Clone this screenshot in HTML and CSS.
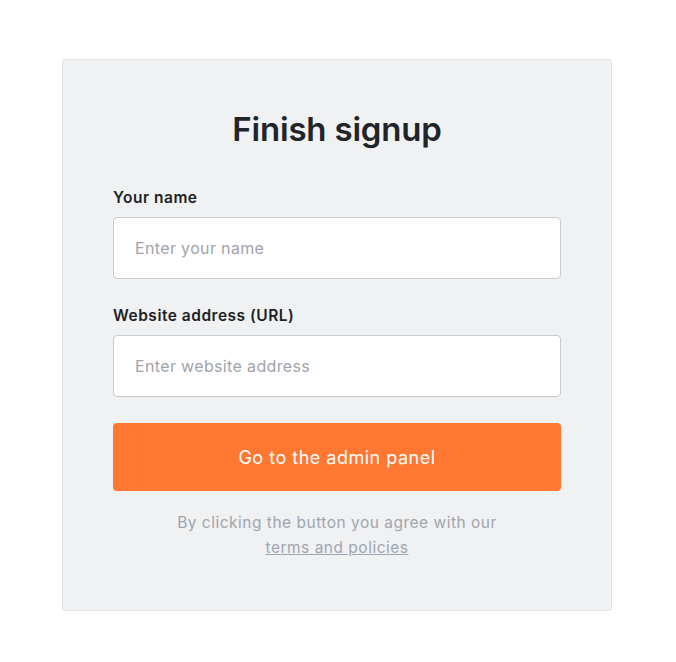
FILE: index.html
```html
<!DOCTYPE html>
<html lang="en">
<head>
  <meta charset="UTF-8">
  <meta name="viewport" content="width=device-width, initial-scale=1.0">
  <title>Finish signup</title>
  <link rel="stylesheet" href="styles.css">
</head>
<body>

  <div class="signup-card">
    <h1 class="signup-title">Finish signup</h1>

    <form class="signup-form" onsubmit="return false;">
      <!-- Name Field -->
      <label for="name">Your name</label>
      <input type="text" id="name" placeholder="Enter your name">

      <!-- Website Field -->
      <label for="website">Website address (URL)</label>
      <input type="text" id="website" placeholder="Enter website address">

      <button type="submit">Go to the admin panel</button>
    </form>

    <p class="signup-note">
      By clicking the button you agree with our<br>
      <a href="#">terms and policies</a>
    </p>
  </div>

</body>
</html>
```

FILE: styles.css
```css
/* General Styling */
body {
  font-family: Inter, "Noto Sans", sans-serif;
  margin: 0;
  background-color: #fff;
}

/* Card */
.signup-card {
  width: 448px;
  margin: 59px 0 0 62px;
  padding: 50px;
  background-color: #f0f1f3;
  border: 1px solid #e2e3e6;
  border-radius: 3px;
}

.signup-title {
  margin: 0;
  font-size: 33px;
  line-height: 38px;
  font-weight: 600;
  color: #212428;
  text-align: center;
  letter-spacing: -0.2px;
}

/* Form */
.signup-form {
  display: flex;
  flex-direction: column;
  margin-top: 40px;
}

.signup-form label {
  font-size: 15.5px;
  line-height: 20px;
  font-weight: 600;
  color: #1d1f22;
  letter-spacing: 0.5px;
  margin-bottom: 9px;
}

.signup-form input {
  height: 62px;
  padding: 0 21px;
  border: 1px solid #c9cacd;
  border-radius: 4px;
  background: #fff;
  font-family: inherit;
  font-size: 16px;
  letter-spacing: 0.35px;
  color: #212428;
  outline: none;
  box-sizing: border-box;
  margin-bottom: 27px;
}

.signup-form input::placeholder {
  color: #9fa3ab;
}

.signup-form input:focus {
  border-color: #ff7731;
}

.signup-form button {
  height: 68px;
  margin-top: -1px;
  border: none;
  border-radius: 4px;
  background-color: #ff7731;
  color: #fff;
  font-family: inherit;
  font-size: 18px;
  letter-spacing: 0.5px;
  cursor: pointer;
}

.signup-form button:hover {
  background-color: #f26a22;
}

/* Footer note */
.signup-note {
  margin: 19px 0 0;
  font-size: 15.5px;
  line-height: 25px;
  letter-spacing: 0.5px;
  color: #a0a5ae;
  text-align: center;
}

.signup-note a {
  color: #a0a5ae;
  text-decoration: underline;
}
```
